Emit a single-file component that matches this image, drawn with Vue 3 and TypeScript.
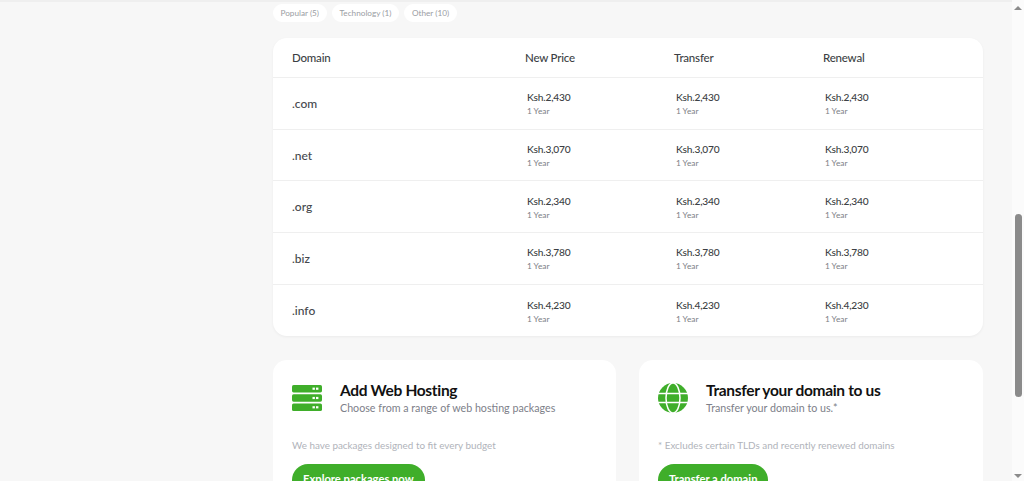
<script setup lang="ts">
// Domain pricing section, scrolled part way down the page.
const filters = ['Popular (5)', 'Technology (1)', 'Other (10)']

const rows = [
  { tld: '.com', price: 'Ksh.2,430' },
  { tld: '.net', price: 'Ksh.3,070' },
  { tld: '.org', price: 'Ksh.2,340' },
  { tld: '.biz', price: 'Ksh.3,780' },
  { tld: '.info', price: 'Ksh.4,230' },
]
</script>

<template>
  <div class="window">
    <main class="page">
      <div class="filters">
        <span v-for="f in filters" :key="f" class="pill">{{ f }}</span>
      </div>

      <section class="table">
        <div class="row head">
          <span>Domain</span>
          <span>New Price</span>
          <span>Transfer</span>
          <span>Renewal</span>
        </div>
        <div v-for="r in rows" :key="r.tld" class="row body">
          <span class="tld">{{ r.tld }}</span>
          <div v-for="n in 3" :key="n" class="price">
            <strong>{{ r.price }}</strong>
            <small>1 Year</small>
          </div>
        </div>
      </section>

      <div class="cards">
        <article class="card">
          <div class="card-top">
            <svg class="icon" viewBox="0 0 30 28" aria-hidden="true">
              <g fill="#3fae2a">
                <rect x="0" y="1" width="30" height="7.4" rx="1.6" />
                <rect x="0" y="10.3" width="30" height="7.4" rx="1.6" />
                <rect x="0" y="19.6" width="30" height="7.4" rx="1.6" />
              </g>
              <g fill="#fff">
                <rect x="20.5" y="3.6" width="2.4" height="2.2" />
                <rect x="24" y="3.6" width="2.4" height="2.2" />
                <rect x="20.5" y="12.9" width="2.4" height="2.2" />
                <rect x="24" y="12.9" width="2.4" height="2.2" />
                <rect x="20.5" y="22.2" width="2.4" height="2.2" />
                <rect x="24" y="22.2" width="2.4" height="2.2" />
              </g>
            </svg>
            <div>
              <h3>Add Web Hosting</h3>
              <p class="sub">Choose from a range of web hosting packages</p>
            </div>
          </div>
          <p class="note">We have packages designed to fit every budget</p>
          <a class="btn">Explore packages now</a>
        </article>

        <article class="card">
          <div class="card-top">
            <svg class="icon" viewBox="0 0 30 30" aria-hidden="true">
              <circle cx="15" cy="15" r="15" fill="#3fae2a" />
              <g fill="none" stroke="#fff" stroke-width="1.5">
                <ellipse cx="15" cy="15" rx="7" ry="15" />
                <path d="M0 10.4h30M0 19.6h30" />
              </g>
            </svg>
            <div>
              <h3>Transfer your domain to us</h3>
              <p class="sub">Transfer your domain to us.*</p>
            </div>
          </div>
          <p class="note">* Excludes certain TLDs and recently renewed domains</p>
          <a class="btn">Transfer a domain</a>
        </article>
      </div>
    </main>

    <div class="scrollbar" aria-hidden="true">
      <i class="arrow up"></i>
      <i class="thumb"></i>
      <i class="arrow down"></i>
    </div>
  </div>
</template>

<style scoped>
.window {
  display: flex;
  height: 481px;
  overflow: hidden;
  background: #f7f7f7;
  font-family: Lato, "Liberation Sans", sans-serif;
  color: #3c3f44;
}
.page {
  flex: 1;
  min-width: 0;
  padding: 2px 29px 0 273px;
  border-top: 2px solid #efefef;
}
.filters {
  display: flex;
  gap: 5.5px;
}
.pill {
  height: 18px;
  line-height: 18px;
  padding: 0 7.5px;
  border-radius: 9px;
  background: #fff;
  font-size: 8.2px;
  color: #9a9da3;
  white-space: nowrap;
}
.table {
  margin-top: 16px;
  background: #fff;
  border-radius: 14px;
  box-shadow: 0 1px 3px rgba(0, 0, 0, 0.05);
}
.row {
  display: grid;
  grid-template-columns: 233px 149px 149px 1fr;
  align-items: center;
  padding-left: 19px;
  border-bottom: 1px solid #efefef;
  box-sizing: border-box;
}
.row:last-child {
  border-bottom: 0;
}
.head {
  height: 40px;
  font-size: 11.5px;
  letter-spacing: -0.2px;
  font-weight: 500;
  color: #3c3f44;
}
.body {
  height: 51.7px;
}
.tld {
  font-size: 12px;
  font-weight: 500;
  color: #45484d;
}
.price {
  padding: 2px 0 0 2px;
  display: flex;
  flex-direction: column;
  gap: 3px;
}
.price strong {
  font-size: 10.2px;
  line-height: 12px;
  letter-spacing: -0.2px;
  font-weight: 500;
  color: #3c3f44;
}
.price small {
  font-size: 8.3px;
  line-height: 11px;
  color: #7b7e85;
}
.cards {
  display: grid;
  grid-template-columns: 343px 344px;
  justify-content: space-between;
  margin-top: 24px;
}
.card {
  background: #fff;
  border-radius: 14px;
  padding: 21px 19px 0;
  height: 140px;
}
.card-top {
  display: flex;
  align-items: flex-start;
  gap: 18px;
}
.icon {
  width: 30px;
  height: 30px;
  flex: none;
  margin-top: 2px;
}
h3 {
  margin: 0;
  font-size: 15.5px;
  line-height: 18px;
  letter-spacing: -0.33px;
  font-weight: 700;
  color: #111;
}
.sub {
  margin: 2px 0 0;
  font-size: 10.7px;
  line-height: 13px;
  color: #7d8089;
}
.note {
  margin: 25px 0 0;
  font-size: 9.9px;
  line-height: 12px;
  color: #b0b3ba;
}
.btn {
  display: inline-block;
  margin-top: 13px;
  padding: 0 11px;
  height: 32px;
  line-height: 30px;
  border-radius: 16px;
  background: #3fae2a;
  color: #fff;
  font-size: 11.2px;
  font-weight: 700;
}
.scrollbar {
  position: relative;
  flex: none;
  width: 12px;
  background: #fbfbfb;
}
.thumb {
  position: absolute;
  top: 214px;
  left: 3px;
  width: 7px;
  height: 183px;
  border-radius: 4px;
  background: #8b8b8b;
}
.arrow {
  position: absolute;
  left: 2px;
  width: 0;
  height: 0;
  border-left: 4px solid transparent;
  border-right: 4px solid transparent;
}
.up {
  top: 6px;
  border-bottom: 4px solid #8b8b8b;
}
.down {
  bottom: 3px;
  border-top: 4px solid #8b8b8b;
}
</style>
